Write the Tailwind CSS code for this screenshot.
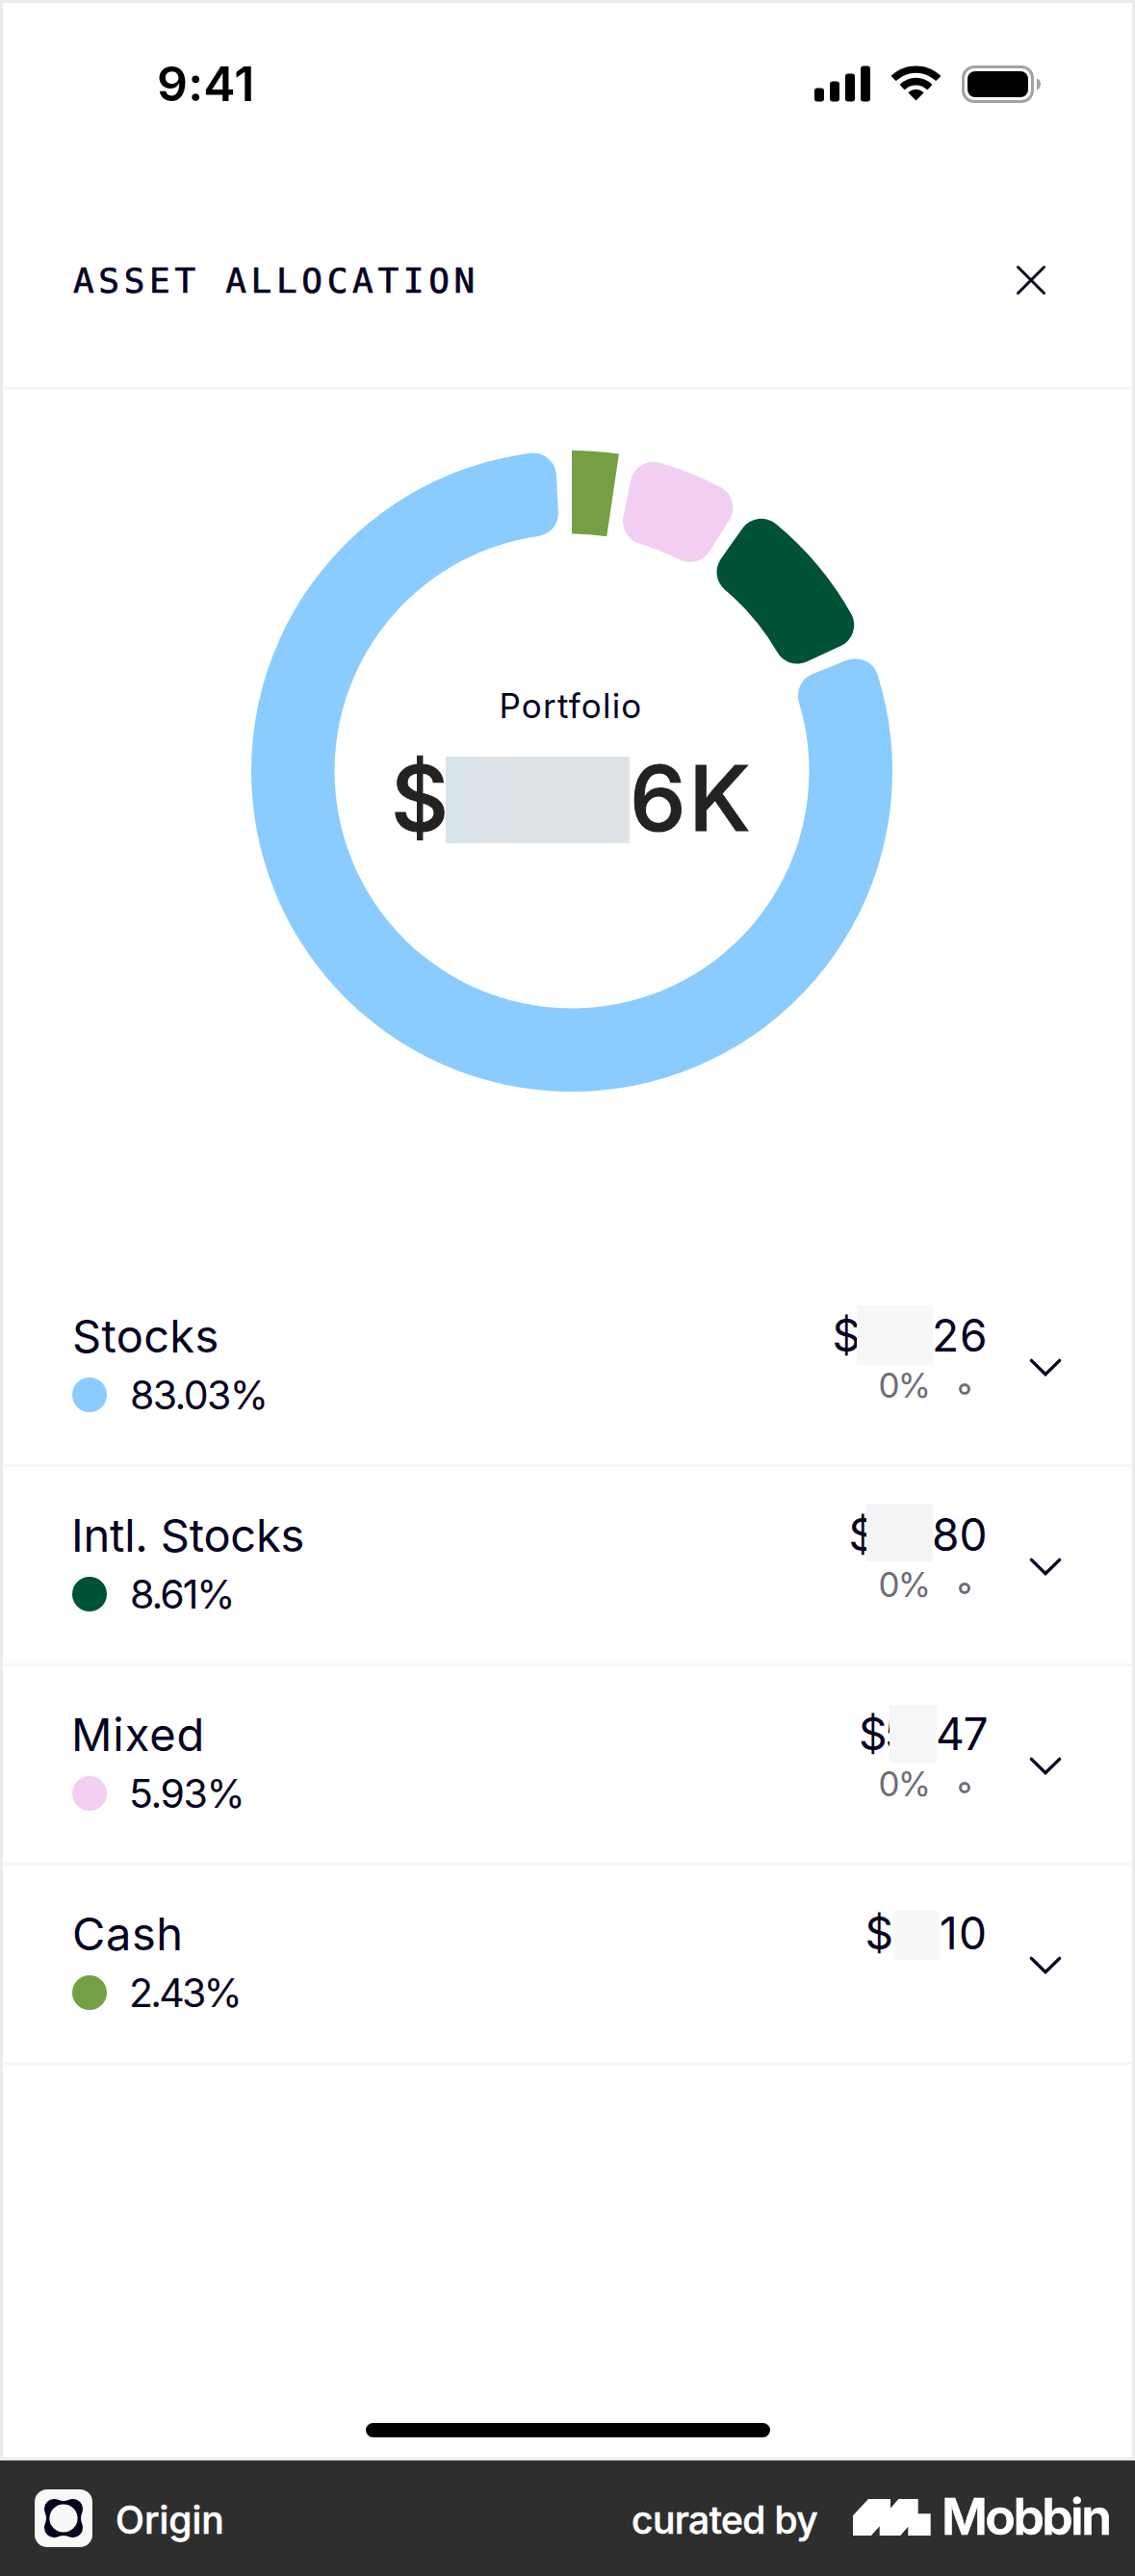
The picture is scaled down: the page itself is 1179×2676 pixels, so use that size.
<!DOCTYPE html>
<html lang="en">
<head>
    <meta charset="UTF-8">
    <meta name="viewport" content="width=device-width, initial-scale=1.0">
    <title>Asset Allocation</title>
    <script src="https://cdn.jsdelivr.net/npm/@tailwindcss/browser@4"></script>
</head>
<body class="w-[1179px] h-[2676px] flex flex-col overflow-hidden bg-white text-[#06031f] font-['Inter',sans-serif]">

    <div class="h-[2556px] flex flex-col border-[3px] border-[#ebebeb] bg-white">

        <!-- Status bar -->
        <div class="h-[168px] flex items-center justify-between pl-[160px] pr-[95px] text-black">
            <p class="text-[50px] leading-[60px] font-semibold tracking-[0.2px]">9:41</p>
            <div class="flex items-center">
                <svg class="w-[58px] h-[38px]" viewBox="0 0 58 38">
                    <rect x="0" y="23.5" width="10" height="14" rx="3"/>
                    <rect x="16" y="16.5" width="10" height="21" rx="3"/>
                    <rect x="32" y="8.5" width="10" height="29" rx="3"/>
                    <rect x="48" y="0.5" width="10" height="37" rx="3"/>
                </svg>
                <svg class="w-[51px] h-[38px] ml-[22px]" viewBox="0 0 17 12.6" preserveAspectRatio="none">
                    <path d="M8.5 2.58c2.46 0 4.84.93 6.62 2.59a.36.36 0 0 0 .5 0l1.28-1.27a.34.34 0 0 0 0-.49C12.2-.89 4.8-.89.1 3.41a.34.34 0 0 0 0 .49l1.28 1.27c.14.14.36.14.5 0A9.7 9.7 0 0 1 8.5 2.58Zm0 4.22c1.35 0 2.66.5 3.66 1.4a.35.35 0 0 0 .5 0l1.28-1.3a.35.35 0 0 0 0-.5 7.97 7.97 0 0 0-10.87 0 .35.35 0 0 0 0 .5L4.35 8.2c.13.13.35.13.49 0A5.47 5.47 0 0 1 8.5 6.8Zm2.49 2.84a.35.35 0 0 0-.01-.5 3.86 3.86 0 0 0-4.96 0 .35.35 0 0 0 0 .5l2.23 2.25a.36.36 0 0 0 .5 0l2.24-2.25Z"/>
                </svg>
                <svg class="w-[82px] h-[39px] ml-[22px]" viewBox="0 0 82 39">
                    <rect x="1.5" y="1.5" width="72" height="36" rx="11.5" fill="none" stroke="#a3a3a3" stroke-width="3"/>
                    <rect x="6" y="6" width="63" height="27" rx="8"/>
                    <path d="M78 13.5c2.4 1 4 3.3 4 6s-1.6 5-4 6z" fill="#a3a3a3"/>
                </svg>
            </div>
        </div>

        <!-- Title bar -->
        <div class="h-[234px] flex items-center justify-between pt-[10px] pl-[73px] pr-[87px] border-b-[3px] border-[#f6f6f6]">
            <h1 class="text-[36px] leading-[44px] tracking-[4.7px] font-['DejaVu_Sans_Mono',monospace] [-webkit-text-stroke:0.7px_#06031f]">ASSET ALLOCATION</h1>
            <svg class="w-[36px] h-[36px] -mt-px" viewBox="0 0 36 36" fill="none" stroke="#06031f" stroke-width="3" stroke-linecap="round">
                <path d="M4.5 4.5l27 27M31.5 4.5l-27 27"/>
            </svg>
        </div>

        <!-- Donut chart -->
        <div class="h-[912px] pt-[63px] pl-[258px]">
            <div class="relative w-[666px] h-[666px]">
                <svg id="donut" class="w-[666px] h-[666px]" viewBox="-333 -333 666 666"></svg>
                <div class="absolute inset-0 pt-[245px]">
                    <p class="pr-[2px] text-center text-[35px] leading-[40px] tracking-[1.2px]">Portfolio</p>
                    <div class="mt-[33px] h-[90px] flex items-start pl-[145px] text-[93px] leading-[87px] font-medium text-[#222222] [-webkit-text-stroke:1px_#222222]">
                        <span class="w-[57px]">$</span>
                        <span class="w-[191px] h-[90px] bg-linear-to-r from-[#d8e3eb] via-[#dfe3e6] to-[#dfe3e5]"></span>
                        <span class="tracking-[3px]">6K</span>
                    </div>
                </div>
            </div>
        </div>

        <!-- Holdings -->
        <div class="h-[207px] flex items-start justify-between px-[72px] border-b-[3px] border-[#f6f6f6]">
            <div class="pt-[42px]">
                <p class="text-[47px] leading-[57px] tracking-[0.3px]">Stocks</p>
                <div class="h-[66px] flex items-center">
                    <span class="w-[36px] h-[36px] rounded-full bg-[#8accff]"></span>
                    <span class="ml-[24px] text-[41px] leading-[66px] tracking-[-1.6px]">83.03%</span>
                </div>
            </div>
            <div class="flex items-start">
                <div>
                    <div class="h-[99px] flex items-start justify-end text-[46px] leading-[57px]">
                        <span class="mt-[42px]">$</span>
                        <span class="-ml-[4px] mt-[39px] w-[79px] h-[62px] bg-[#f7f7f7]"></span>
                        <span class="-ml-px mt-[42px] w-[59px] tracking-[1px]">26</span>
                    </div>
                    <div class="h-[47px] flex items-center justify-end pr-[19px] text-[#6e6d7a]">
                        <span class="text-[35px] leading-[47px] tracking-[-2px]">0%</span>
                        <span class="ml-[31px] mt-[7px] w-[12px] h-[12px] rounded-full border-[3px] border-[#6e6d7a]"></span>
                    </div>
                </div>
                <svg class="w-[36px] h-[25px] mt-[91px] ml-[41px]" viewBox="0 0 36 25" fill="none" stroke="#06031f" stroke-width="3.4" stroke-linecap="round">
                    <path d="M3.4 5.4 18 19.6 32.6 5.4"/>
                </svg>
            </div>
        </div>

        <div class="h-[207px] flex items-start justify-between px-[72px] border-b-[3px] border-[#f6f6f6]">
            <div class="pt-[42px]">
                <p class="text-[47px] leading-[57px] tracking-[-0.2px] -ml-px">Intl. Stocks</p>
                <div class="h-[66px] flex items-center">
                    <span class="w-[36px] h-[36px] rounded-full bg-[#005236]"></span>
                    <span class="ml-[24px] text-[41px] leading-[66px] tracking-[-2px]">8.61%</span>
                </div>
            </div>
            <div class="flex items-start">
                <div>
                    <div class="h-[99px] flex items-start justify-end text-[46px] leading-[57px]">
                        <span class="mt-[42px]">$</span>
                        <span class="-ml-[11px] mt-[38px] w-[69px] h-[60px] bg-[#f5f5f7]"></span>
                        <span class="-ml-px mt-[42px] w-[59px]">80</span>
                    </div>
                    <div class="h-[47px] flex items-center justify-end pr-[19px] text-[#6e6d7a]">
                        <span class="text-[35px] leading-[47px] tracking-[-2px]">0%</span>
                        <span class="ml-[31px] mt-[7px] w-[12px] h-[12px] rounded-full border-[3px] border-[#6e6d7a]"></span>
                    </div>
                </div>
                <svg class="w-[36px] h-[25px] mt-[91px] ml-[41px]" viewBox="0 0 36 25" fill="none" stroke="#06031f" stroke-width="3.4" stroke-linecap="round">
                    <path d="M3.4 5.4 18 19.6 32.6 5.4"/>
                </svg>
            </div>
        </div>

        <div class="h-[207px] flex items-start justify-between px-[72px] border-b-[3px] border-[#f6f6f6]">
            <div class="pt-[42px]">
                <p class="text-[47px] leading-[57px] tracking-[0.9px] -ml-px">Mixed</p>
                <div class="h-[66px] flex items-center">
                    <span class="w-[36px] h-[36px] rounded-full bg-[#f2cff2]"></span>
                    <span class="ml-[23px] text-[41px] leading-[66px] tracking-[-1.4px]">5.93%</span>
                </div>
            </div>
            <div class="flex items-start">
                <div>
                    <div class="h-[99px] flex items-start justify-end text-[46px] leading-[57px]">
                        <span class="mt-[42px] w-[32px] tracking-[-3px]">$5</span>
                        <span class="mt-[40px] w-[49px] h-[60px] bg-[#f5f6f8]"></span>
                        <span class="-ml-px mt-[42px] w-[55px] tracking-[-1.2px]">47</span>
                    </div>
                    <div class="h-[47px] flex items-center justify-end pr-[19px] text-[#6e6d7a]">
                        <span class="text-[35px] leading-[47px] tracking-[-2px]">0%</span>
                        <span class="ml-[31px] mt-[7px] w-[12px] h-[12px] rounded-full border-[3px] border-[#6e6d7a]"></span>
                    </div>
                </div>
                <svg class="w-[36px] h-[25px] mt-[91px] ml-[41px]" viewBox="0 0 36 25" fill="none" stroke="#06031f" stroke-width="3.4" stroke-linecap="round">
                    <path d="M3.4 5.4 18 19.6 32.6 5.4"/>
                </svg>
            </div>
        </div>

        <div class="h-[207px] flex items-start justify-between px-[72px] border-b-[3px] border-[#f6f6f6]">
            <div class="pt-[42px]">
                <p class="text-[47px] leading-[57px] tracking-[0.6px]">Cash</p>
                <div class="h-[66px] flex items-center">
                    <span class="w-[36px] h-[36px] rounded-full bg-[#759f45]"></span>
                    <span class="ml-[23px] text-[41px] leading-[66px] tracking-[-2.8px]">2.43%</span>
                </div>
            </div>
            <div class="flex items-start">
                <div class="h-[99px] flex items-start justify-end text-[46px] leading-[57px]">
                    <span class="mt-[42px]">$</span>
                    <span class="mt-[47px] w-[48px] h-[51px] bg-[#f8f8f8]"></span>
                    <span class="mt-[42px] w-[51px] tracking-[1.3px]">10</span>
                </div>
                <svg class="w-[36px] h-[25px] mt-[91px] ml-[41px]" viewBox="0 0 36 25" fill="none" stroke="#06031f" stroke-width="3.4" stroke-linecap="round">
                    <path d="M3.4 5.4 18 19.6 32.6 5.4"/>
                </svg>
            </div>
        </div>

        <!-- Home indicator -->
        <div class="mt-auto mb-[21px] mx-auto w-[420px] h-[15px] rounded-full bg-black"></div>
    </div>

    <!-- Footer -->
    <footer class="h-[120px] flex items-center pl-[36px] pr-[24px] bg-[#2e2e2e] text-white">
        <svg class="w-[60px] h-[60px]" viewBox="0 0 60 60">
            <rect width="60" height="60" rx="13" fill="#f8f8f8"/>
            <path d="M10 20A10 10 0 0 1 20 10C24 10 26 12 30 12C34 12 36 10 40 10A10 10 0 0 1 50 20C50 24 48 26 48 30C48 34 50 36 50 40A10 10 0 0 1 40 50C36 50 34 48 30 48C26 48 24 50 20 50A10 10 0 0 1 10 40C10 36 12 34 12 30C12 26 10 24 10 20Z" fill="#06031f"/>
            <circle cx="30" cy="30" r="14.6" fill="#f8f8f8"/>
        </svg>
        <p class="ml-[24px] mt-[3px] text-[39px] leading-[48px] font-medium [-webkit-text-stroke:0.5px_#fff]">Origin</p>
        <p class="ml-auto w-[230px] mt-[3px] text-[39px] leading-[48px] font-medium tracking-[-0.6px] whitespace-nowrap [-webkit-text-stroke:0.5px_#fff]">curated by</p>
        <svg class="w-[81px] h-[38px] -mt-[2px]" viewBox="0 0 81 38" fill="#fff">
            <path d="M16 0H39V9.7L47.3 0H67.7V15.3H80.7V38H57.3V28.7L49.3 38H27.7V28.3L19 38H0V17.3Z"/>
        </svg>
        <p class="ml-[11px] -mt-[2px] w-[177px] text-[52px] leading-[60px] font-semibold tracking-[-2.6px] [-webkit-text-stroke:0.6px_#fff]">Mobbin</p>
    </footer>

    <script>
        const R = 333, r = 246.5, pad = 3;
        const data = [
            { value: 2.43, color: '#759f45', corner: 0 },
            { value: 5.93, color: '#f2cff2', corner: 24 },
            { value: 8.61, color: '#005236', corner: 24 },
            { value: 83.03, color: '#8accff', corner: 24 }
        ];

        // angle in degrees, clockwise from the top
        function point(radius, deg) {
            const a = deg * Math.PI / 180;
            return `${(radius * Math.sin(a)).toFixed(2)} ${(-radius * Math.cos(a)).toFixed(2)}`;
        }

        function sector(a0, a1, c) {
            const outer = Math.asin(c / (R - c)) * 180 / Math.PI;
            const inner = Math.asin(c / (r + c)) * 180 / Math.PI;
            const lineOut = Math.sqrt((R - c) ** 2 - c * c);
            const lineIn = Math.sqrt((r + c) ** 2 - c * c);
            const large = a1 - a0 > 180 ? 1 : 0;
            return `M${point(lineOut, a0)} A${c} ${c} 0 0 1 ${point(R, a0 + outer)}
                A${R} ${R} 0 ${large} 1 ${point(R, a1 - outer)} A${c} ${c} 0 0 1 ${point(lineOut, a1)}
                L${point(lineIn, a1)} A${c} ${c} 0 0 1 ${point(r, a1 - inner)}
                A${r} ${r} 0 ${large} 0 ${point(r, a0 + inner)} A${c} ${c} 0 0 1 ${point(lineIn, a0)}Z`;
        }

        let start = 0;
        document.getElementById('donut').innerHTML = data.map(d => {
            const end = start + d.value / 100 * (360 - pad * data.length);
            const path = `<path d="${sector(start, end, d.corner)}" fill="${d.color}"/>`;
            start = end + pad;
            return path;
        }).join('');
    </script>
</body>
</html>
